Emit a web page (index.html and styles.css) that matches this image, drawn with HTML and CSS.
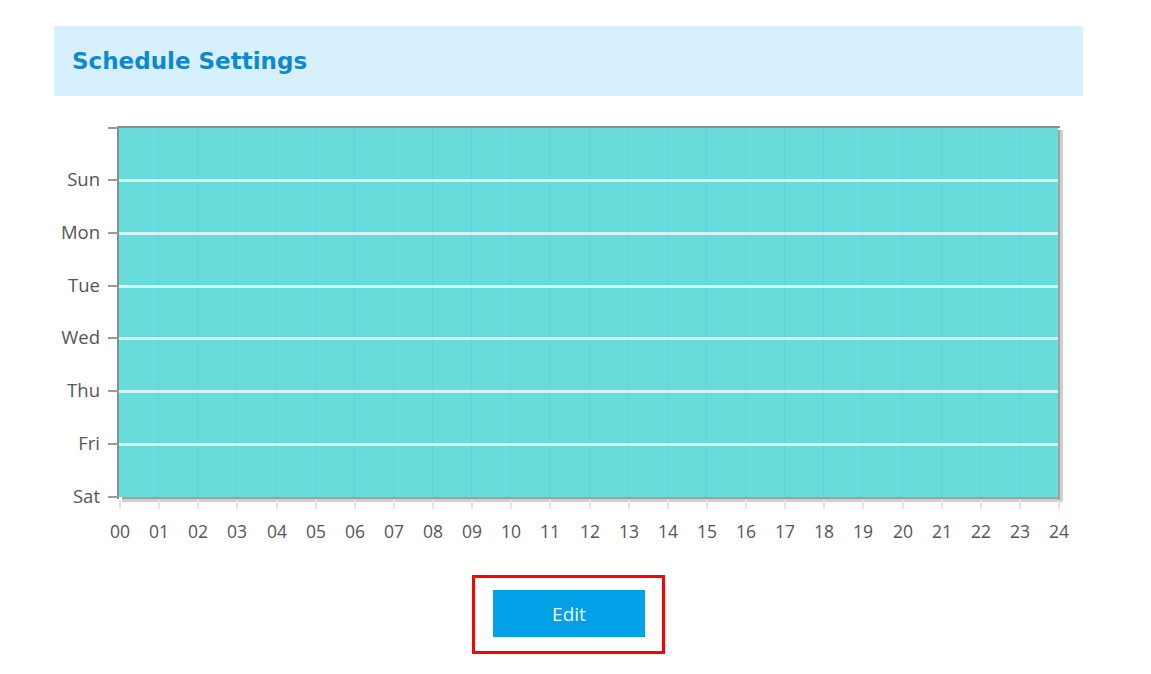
FILE: index.html
```html
<!DOCTYPE html>
<html lang="en">
<head>
	<meta charset="UTF-8">
	<title>Schedule Settings</title>
	<link rel="stylesheet" href="styles.css">
</head>
<body>
<div class="page">
	<div class="title-bar">
		<h2>Schedule Settings</h2>
	</div>

	<svg class="chart" width="1029" height="444" viewBox="54 116 1029 444" id="chart">
		<!-- shadow -->
		<rect x="1058" y="130" width="5" height="372" fill="#cfcfcf"/>
		<rect x="122" y="497" width="941" height="5" fill="#cfcfcf"/>
		<rect x="1058" y="130" width="2" height="370" fill="#a0a0a0"/>
		<rect x="122" y="497" width="938" height="2" fill="#a0a0a0"/>
		<!-- plot -->
		<rect x="119" y="128" width="939" height="369" fill="#67dcdb"/>
		<g id="vlines"></g>
		<g id="hlines"></g>
		<rect x="117" y="126" width="943" height="2" fill="#8d8d8d"/>
		<rect x="117" y="126" width="2" height="373" fill="#8d8d8d"/>
		<g id="yaxis" class="axis days"></g>
		<g id="xaxis" class="axis hours"></g>
	</svg>

	<div class="actions">
		<div class="focus">
			<a class="btn">Edit</a>
		</div>
	</div>
</div>
<script>
	(function () {
		var NS = 'http://www.w3.org/2000/svg';
		var days = ['Sun', 'Mon', 'Tue', 'Wed', 'Thu', 'Fri', 'Sat'];
		var x0 = 119, x1 = 1058, y0 = 127, y1 = 497;
		var step = (x1 - x0) / 24;
		var row = (y1 - y0) / 7;

		function el(parent, name, attrs, text) {
			var e = document.createElementNS(NS, name);
			for (var k in attrs) e.setAttribute(k, attrs[k]);
			if (text) e.textContent = text;
			document.getElementById(parent).appendChild(e);
		}

		// 小时刻度
		for (var i = 0; i <= 24; i++) {
			var x = Math.round(x0 + i * step);
			if (i > 0 && i < 24) {
				el('vlines', 'rect', {x: x, y: 128, width: 1, height: 369, fill: '#5ed4d4'});
			}
			el('xaxis', 'rect', {x: x, y: 500, width: 2, height: 9, fill: '#e4e4e4'});
			el('xaxis', 'text', {x: x + 1, y: 538, 'text-anchor': 'middle'}, (i < 10 ? '0' : '') + i);
		}

		// 星期
		el('yaxis', 'rect', {x: 108, y: 127, width: 10, height: 2, fill: '#9a9a9a'});
		days.forEach(function (d, n) {
			var y = Math.round(y0 + (n + 1) * row);
			if (n < 6) {
				el('hlines', 'rect', {x: 119, y: y - 1, width: 939, height: 3, fill: '#d6f4f1'});
			}
			el('yaxis', 'rect', {x: 108, y: y - 1, width: 10, height: 2, fill: '#9a9a9a'});
			el('yaxis', 'text', {x: 100, y: y + 6, 'text-anchor': 'end'}, d);
		});
	})();
</script>
</body>
</html>
```

FILE: styles.css
```css
html, body {
    margin: 0;
    background: #fff;
}

.page {
    width: 1029px;
    margin-left: 54px;
    padding-top: 26px;
}

.title-bar {
    display: flex;
    align-items: center;
    height: 70px;
    padding-left: 18px;
    background: #d6f1fd;
}

.title-bar h2 {
    margin: 0;
    font: bold 23px "DejaVu Sans", sans-serif;
    color: #0f88d2;
    letter-spacing: 0;
}

.chart {
    display: block;
    margin-top: 20px;
}

.axis text {
    font: 17.5px "Open Sans", sans-serif;
    fill: #555;
}

.days text {
    font-size: 18.5px;
}

.actions {
    display: flex;
    justify-content: center;
    margin-top: 15px;
}

.focus {
    padding: 12px 17px 14px 18px;
    border: 3px solid #f00;
}

.btn {
    display: flex;
    align-items: center;
    justify-content: center;
    width: 152px;
    height: 47px;
    background: #02a0e7;
    color: #f2fbff;
    font: 19px "Open Sans", sans-serif;
}
```
